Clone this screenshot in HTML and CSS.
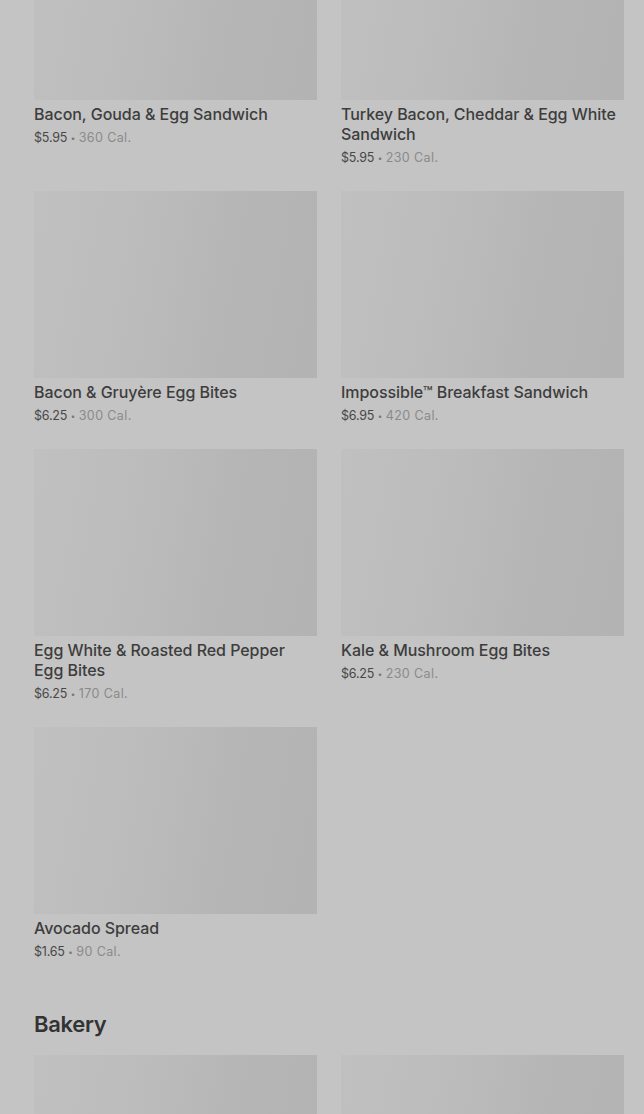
FILE: index.html
```html
<!DOCTYPE html>
<html>
<head>
<meta charset="utf-8">
<link rel="stylesheet" href="styles.css">
</head>
<body>
<main class="page">
  <section class="grid first">
    <div class="item"><div class="thumb"></div><div class="name">Bacon, Gouda &amp; Egg Sandwich</div><div class="meta"><span class="price">$5.95</span> <span class="dot">•</span> <span class="cal">360 Cal.</span></div></div>
    <div class="item"><div class="thumb"></div><div class="name">Turkey Bacon, Cheddar &amp; Egg White Sandwich</div><div class="meta"><span class="price">$5.95</span> <span class="dot">•</span> <span class="cal">230 Cal.</span></div></div>
    <div class="item"><div class="thumb"></div><div class="name">Bacon &amp; Gruyère Egg Bites</div><div class="meta"><span class="price">$6.25</span> <span class="dot">•</span> <span class="cal">300 Cal.</span></div></div>
    <div class="item"><div class="thumb"></div><div class="name">Impossible™ Breakfast Sandwich</div><div class="meta"><span class="price">$6.95</span> <span class="dot">•</span> <span class="cal">420 Cal.</span></div></div>
    <div class="item"><div class="thumb"></div><div class="name">Egg White &amp; Roasted Red Pepper Egg Bites</div><div class="meta"><span class="price">$6.25</span> <span class="dot">•</span> <span class="cal">170 Cal.</span></div></div>
    <div class="item"><div class="thumb"></div><div class="name">Kale &amp; Mushroom Egg Bites</div><div class="meta"><span class="price">$6.25</span> <span class="dot">•</span> <span class="cal">230 Cal.</span></div></div>
    <div class="item"><div class="thumb"></div><div class="name">Avocado Spread</div><div class="meta"><span class="price">$1.65</span> <span class="dot">•</span> <span class="cal">90 Cal.</span></div></div>
  </section>
  <h2 class="section-title">Bakery</h2>
  <section class="grid">
    <div class="item"><div class="thumb"></div></div>
    <div class="item"><div class="thumb"></div></div>
  </section>
</main>
</body>
</html>
```

FILE: styles.css
```css
html, body {
  margin: 0;
  padding: 0;
  background: #c4c4c4;
  overflow: hidden;
}
body {
  font-family: "Inter", "Roboto", "Liberation Sans", sans-serif;
  color: #3b3b3b;
}
.page {
  padding: 0 20px 0 34px;
}
.grid {
  display: grid;
  grid-template-columns: 283px 283px;
  column-gap: 24px;
  row-gap: 25px;
}
.grid.first {
  margin-top: -87px;
}
.thumb {
  height: 187px;
  background: linear-gradient(100deg, #c0c0c0 0%, #bcbcbc 35%, #b5b5b5 70%, #b3b3b3 100%);
}
.name {
  margin-top: 4px;
  font-size: 16px;
  line-height: 20px;
  font-weight: 500;
  color: #3d3d3d;
  letter-spacing: -0.05px;
}
.meta {
  margin-top: 4px;
  height: 18px;
  padding-top: 1px;
  box-sizing: border-box;
  font-size: 12.5px;
  line-height: 17px;
  color: #8a8a8a;
}
.price {
  color: #474747;
  letter-spacing: -0.2px;
}
.dot {
  font-size: 8px;
  line-height: 0;
  color: #777;
  vertical-align: 1px;
}
.cal {
  letter-spacing: 0.4px;
}
.section-title {
  margin: 50px 0 17px;
  font-size: 22px;
  line-height: 28px;
  font-weight: 600;
  color: #333;
  letter-spacing: -0.3px;
}
```
